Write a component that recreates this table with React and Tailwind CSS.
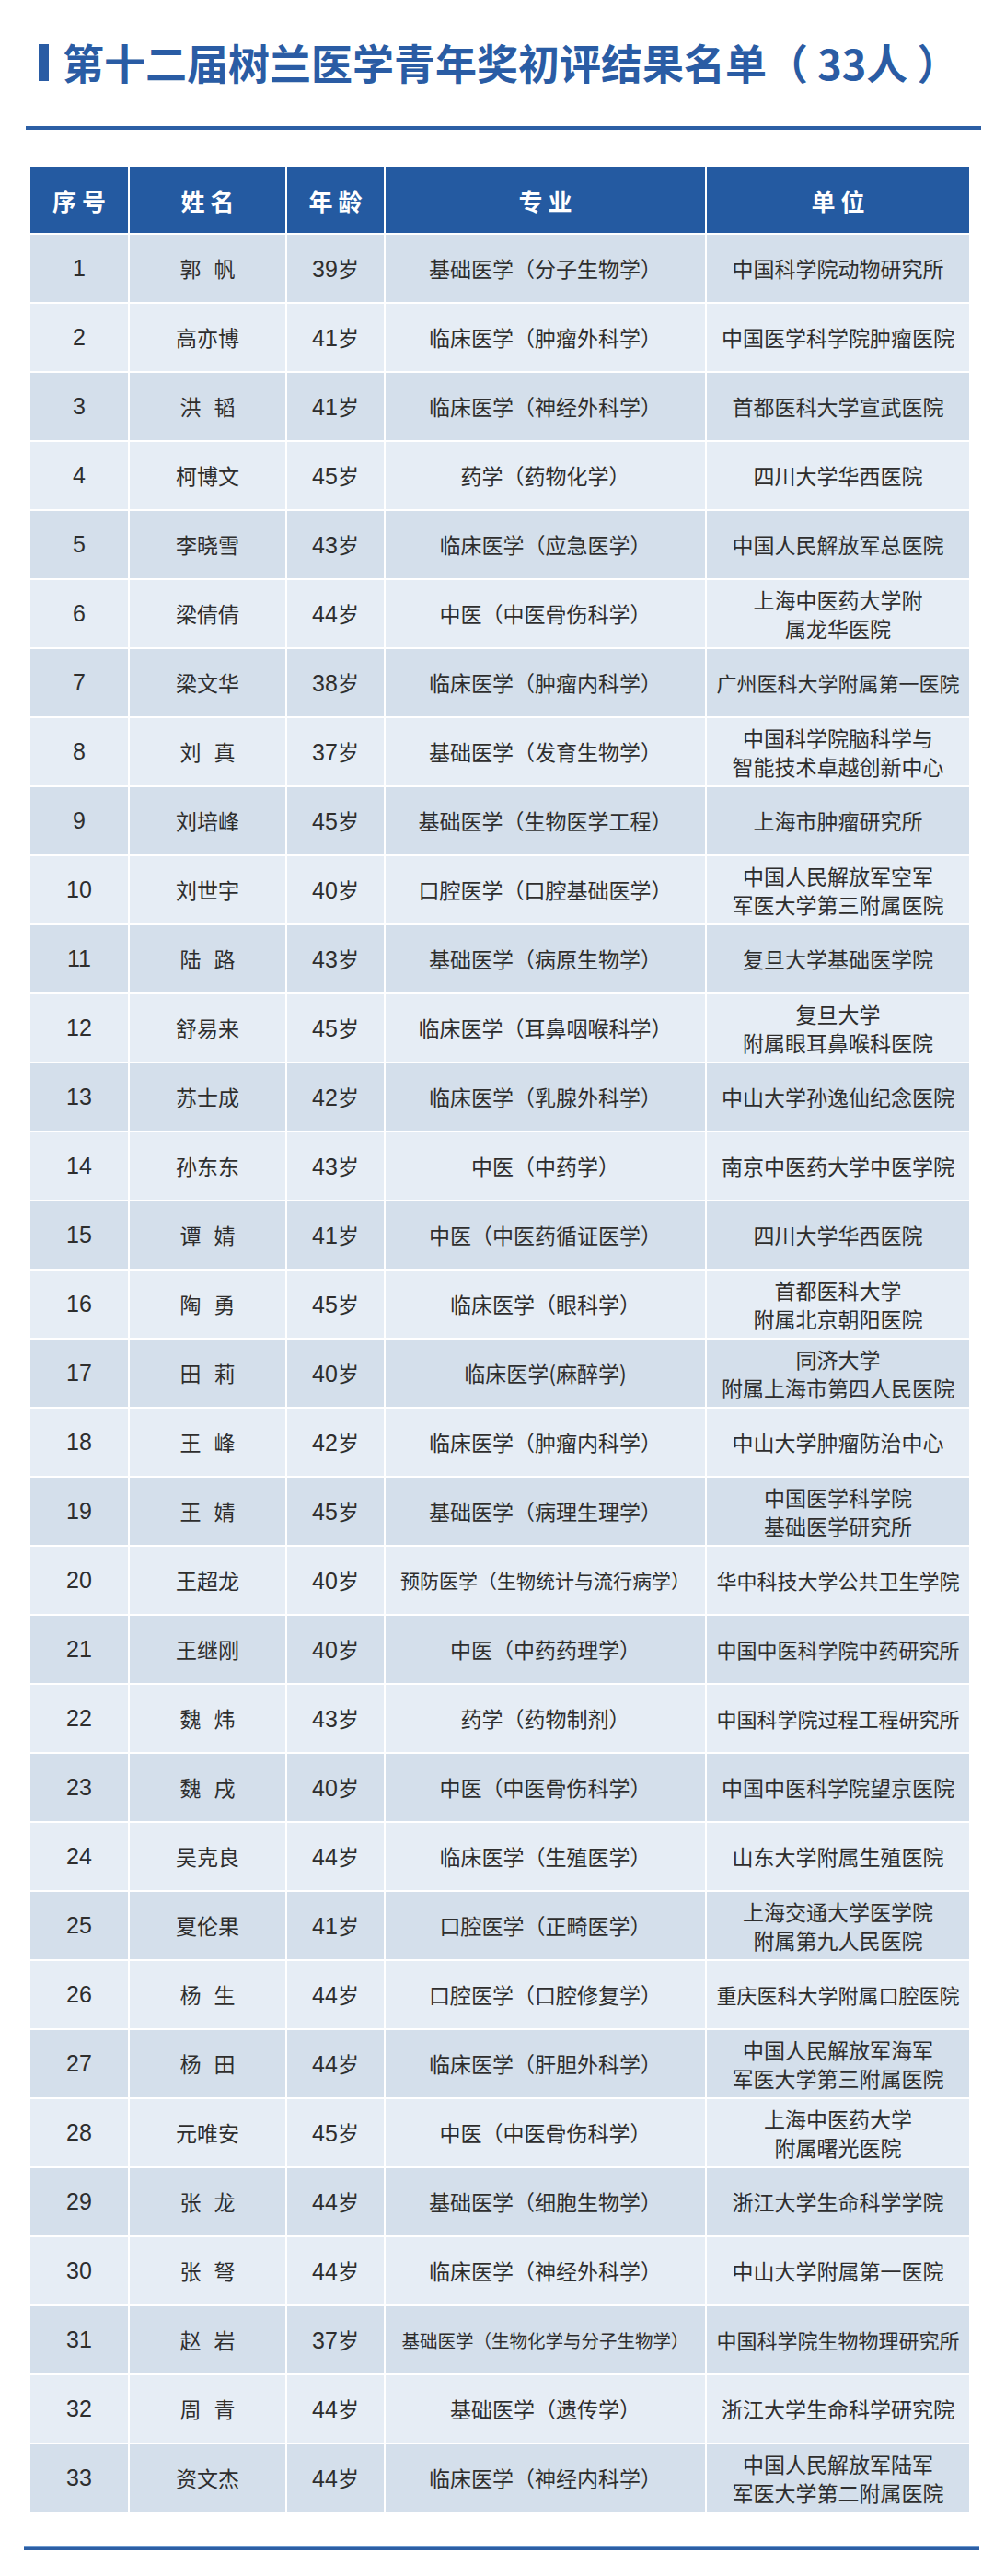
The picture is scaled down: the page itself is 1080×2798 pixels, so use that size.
import React from "react";

const rows = [
  ["1", "郭 帆", "39岁", "基础医学（分子生物学）", ["中国科学院动物研究所"]],
  ["2", "高亦博", "41岁", "临床医学（肿瘤外科学）", ["中国医学科学院肿瘤医院"]],
  ["3", "洪 韬", "41岁", "临床医学（神经外科学）", ["首都医科大学宣武医院"]],
  ["4", "柯博文", "45岁", "药学（药物化学）", ["四川大学华西医院"]],
  ["5", "李晓雪", "43岁", "临床医学（应急医学）", ["中国人民解放军总医院"]],
  ["6", "梁倩倩", "44岁", "中医（中医骨伤科学）", ["上海中医药大学附", "属龙华医院"]],
  ["7", "梁文华", "38岁", "临床医学（肿瘤内科学）", ["广州医科大学附属第一医院"]],
  ["8", "刘 真", "37岁", "基础医学（发育生物学）", ["中国科学院脑科学与", "智能技术卓越创新中心"]],
  ["9", "刘培峰", "45岁", "基础医学（生物医学工程）", ["上海市肿瘤研究所"]],
  ["10", "刘世宇", "40岁", "口腔医学（口腔基础医学）", ["中国人民解放军空军", "军医大学第三附属医院"]],
  ["11", "陆 路", "43岁", "基础医学（病原生物学）", ["复旦大学基础医学院"]],
  ["12", "舒易来", "45岁", "临床医学（耳鼻咽喉科学）", ["复旦大学", "附属眼耳鼻喉科医院"]],
  ["13", "苏士成", "42岁", "临床医学（乳腺外科学）", ["中山大学孙逸仙纪念医院"]],
  ["14", "孙东东", "43岁", "中医（中药学）", ["南京中医药大学中医学院"]],
  ["15", "谭 婧", "41岁", "中医（中医药循证医学）", ["四川大学华西医院"]],
  ["16", "陶 勇", "45岁", "临床医学（眼科学）", ["首都医科大学", "附属北京朝阳医院"]],
  ["17", "田 莉", "40岁", "临床医学(麻醉学)", ["同济大学", "附属上海市第四人民医院"]],
  ["18", "王 峰", "42岁", "临床医学（肿瘤内科学）", ["中山大学肿瘤防治中心"]],
  ["19", "王 婧", "45岁", "基础医学（病理生理学）", ["中国医学科学院", "基础医学研究所"]],
  ["20", "王超龙", "40岁", "预防医学（生物统计与流行病学）", ["华中科技大学公共卫生学院"]],
  ["21", "王继刚", "40岁", "中医（中药药理学）", ["中国中医科学院中药研究所"]],
  ["22", "魏 炜", "43岁", "药学（药物制剂）", ["中国科学院过程工程研究所"]],
  ["23", "魏 戌", "40岁", "中医（中医骨伤科学）", ["中国中医科学院望京医院"]],
  ["24", "吴克良", "44岁", "临床医学（生殖医学）", ["山东大学附属生殖医院"]],
  ["25", "夏伦果", "41岁", "口腔医学（正畸医学）", ["上海交通大学医学院", "附属第九人民医院"]],
  ["26", "杨 生", "44岁", "口腔医学（口腔修复学）", ["重庆医科大学附属口腔医院"]],
  ["27", "杨 田", "44岁", "临床医学（肝胆外科学）", ["中国人民解放军海军", "军医大学第三附属医院"]],
  ["28", "元唯安", "45岁", "中医（中医骨伤科学）", ["上海中医药大学", "附属曙光医院"]],
  ["29", "张 龙", "44岁", "基础医学（细胞生物学）", ["浙江大学生命科学学院"]],
  ["30", "张 弩", "44岁", "临床医学（神经外科学）", ["中山大学附属第一医院"]],
  ["31", "赵 岩", "37岁", "基础医学（生物化学与分子生物学）", ["中国科学院生物物理研究所"]],
  ["32", "周 青", "44岁", "基础医学（遗传学）", ["浙江大学生命科学研究院"]],
  ["33", "资文杰", "44岁", "临床医学（神经内科学）", ["中国人民解放军陆军", "军医大学第二附属医院"]],
];

const headers = ["序号", "姓名", "年龄", "专业", "单位"];
const latin = { fontFamily: '"Liberation Sans", Arial, sans-serif' };

export default function App() {
  return (
    <div
      className="w-[1080px] h-[2798px] bg-white overflow-hidden"
      style={{ fontFamily: '"Noto Sans CJK SC", "Noto Sans", sans-serif' }}
    >
      <div className="flex items-center h-[56px] mt-[40px] pl-[42px]">
        <div className="w-[11px] h-[40px] bg-[#2a5ca4]" />
        <div className="ml-[15px] text-[45px] leading-[56px] font-bold text-[#2a5ca4] whitespace-nowrap">
          第十二届树兰医学青年奖初评结果名单（ 33人 ）
        </div>
      </div>

      <div className="mt-[41px] ml-[28px] w-[1038px] h-[4px] bg-[#2c5fa5]" />

      <div className="mt-[40px] ml-[33px] grid grid-cols-[106px_169px_105px_347px_285px] gap-[2px]">
        {headers.map((h) => (
          <div
            key={h}
            className="h-[72px] bg-[#245aa1] flex items-center justify-center text-white text-[26px] font-bold tracking-[6px] pl-[6px]"
          >
            {h}
          </div>
        ))}
        {rows.map((r, i) => {
          const bg = i % 2 === 0 ? "bg-[#d4dfeb]" : "bg-[#e6edf5]";
          const cell = `h-[73px] ${bg} flex flex-col items-center justify-center text-[#2e2e2e] text-[22px] leading-[31px] text-center whitespace-nowrap`;
          const age = r[2].replace("岁", "");
          return (
            <React.Fragment key={r[0]}>
              <div className={cell}>
                <span className="text-[25px]" style={latin}>{r[0]}</span>
              </div>
              <div className={cell}>
                <span className="text-[23px] [word-spacing:9px]">{r[1]}</span>
              </div>
              <div className={cell}>
                <span className="flex items-baseline">
                  <span className="text-[25px]" style={latin}>{age}</span>
                  <span className="text-[23px]">岁</span>
                </span>
              </div>
              <div className={cell}>
                <span className={r[0] === "31" ? "text-[19.5px]" : r[0] === "20" ? "text-[21px]" : "text-[23px]"}>{r[3]}</span>
              </div>
              <div className={cell}>
                {r[4].map((l) => (
                  <span key={l} className={l.length >= 12 ? "text-[22px]" : "text-[23px]"}>{l}</span>
                ))}
              </div>
            </React.Fragment>
          );
        })}
      </div>

      <div className="mt-[37px] ml-[26px] w-[1038px] h-[5px] bg-[#2c5fa5] border-t border-[#6f9bd0]" />
    </div>
  );
}
